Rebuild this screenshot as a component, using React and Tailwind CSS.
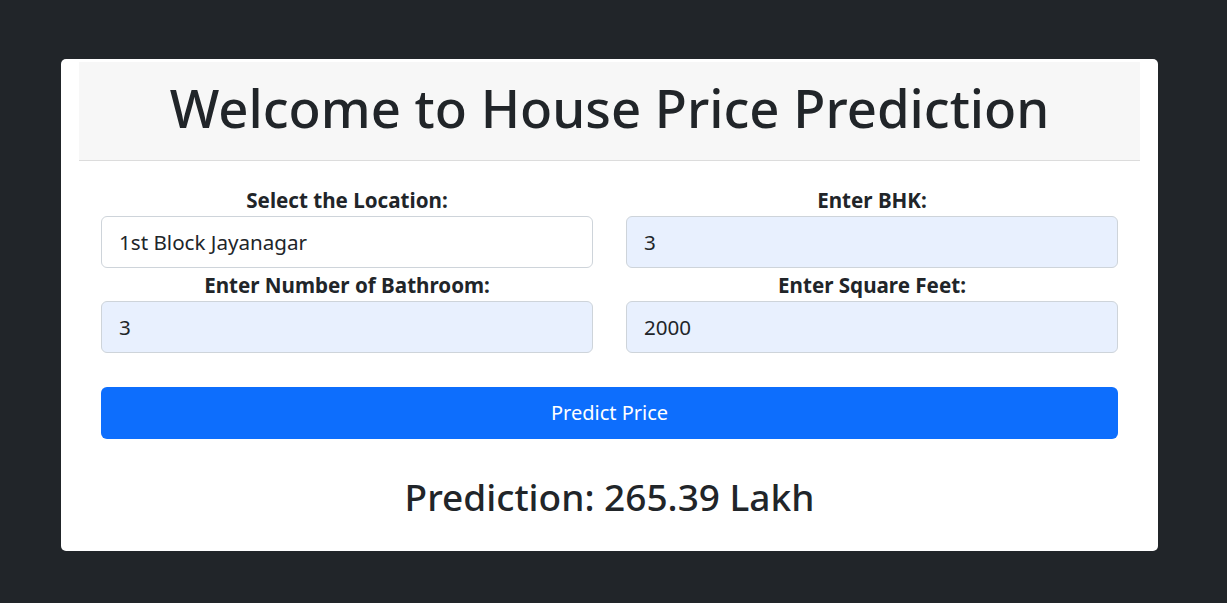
import { useState } from 'react';

const font = { fontFamily: '"Noto Sans", "Open Sans", Arial, sans-serif' };

function Field({ label, value, onChange, filled }) {
    return (
        <div className="flex flex-col">
            <label className="h-[24px] text-center text-[20.6px] leading-[24px] font-bold text-[#212529] mb-[4px]">{label}</label>
            <input
                type="text"
                value={value}
                onChange={onChange}
                className={`h-[52px] w-full rounded-[6px] border border-[#ced4da] px-[17px] text-[20.6px] text-[#212529] outline-none ${filled ? 'bg-[#e8f0fe]' : 'bg-white'}`}
            />
        </div>
    );
}

export default function App() {
    const [form, setForm] = useState({
        location: '1st Block Jayanagar',
        bhk: '3',
        bath: '3',
        sqft: '2000'
    });

    const set = (key) => (e) => setForm({ ...form, [key]: e.target.value });

    return (
        <div className="min-h-screen bg-[#212529] pt-[59px]" style={font}>
            <div className="ml-[61px] w-[1097px] h-[492px] bg-white rounded-[5px] flex flex-col">
                <div className="mx-[18px] mt-[3px] h-[99px] bg-[#f7f7f7] border-b border-[#dcdcdc] flex items-center justify-center">
                    <h1 className="text-[52.7px] leading-none font-medium text-[#212529] -mt-[6px]">Welcome to House Price Prediction</h1>
                </div>

                <div className="px-[40px] pt-[27px]">
                    <div className="grid grid-cols-2 gap-x-[33px] gap-y-[5px]">
                        <Field label="Select the Location:" value={form.location} onChange={set('location')} />
                        <Field label="Enter BHK:" value={form.bhk} onChange={set('bhk')} filled />
                        <Field label="Enter Number of Bathroom:" value={form.bath} onChange={set('bath')} filled />
                        <Field label="Enter Square Feet:" value={form.sqft} onChange={set('sqft')} filled />
                    </div>

                    <button className="mt-[34px] w-full h-[52px] rounded-[6px] bg-[#0d6efd] text-white text-[20px]">
                        Predict Price
                    </button>

                    <h2 className="mt-[34px] text-center text-[37px] leading-[48px] font-medium text-[#212529]">
                        Prediction: 265.39 Lakh
                    </h2>
                </div>
            </div>
        </div>
    );
}
